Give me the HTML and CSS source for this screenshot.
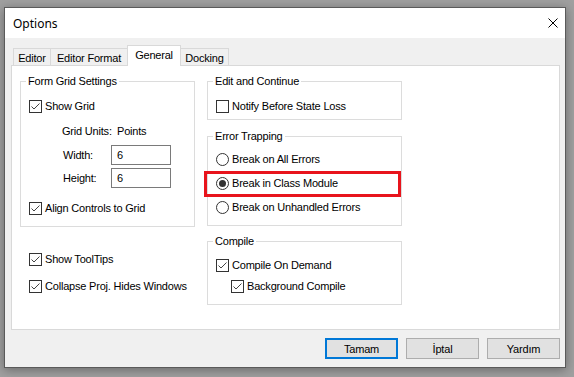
FILE: index.html
```html
<!DOCTYPE html>
<html>
<head>
<meta charset="utf-8">
<title>Options</title>
<link rel="stylesheet" href="styles.css">
</head>
<body>
<div class="window">
  <div class="titlebar">
    <span class="title">Options</span>
    <svg class="close" width="10" height="10" viewBox="0 0 10 10"><path d="M0.5 0.5L9.5 9.5M9.5 0.5L0.5 9.5" stroke="#000" stroke-width="1" fill="none"/></svg>
  </div>
  <div class="body">
    <div class="tabs">
      <div class="tab t-editor">Editor</div>
      <div class="tab t-format">Editor Format</div>
      <div class="tab t-general active">General</div>
      <div class="tab t-docking">Docking</div>
    </div>
    <div class="panel">
      <div class="col col-left">
        <fieldset class="group g-grid">
          <legend>Form Grid Settings</legend>
          <div class="row r-showgrid"><span class="cb"><svg width="11" height="11" viewBox="0 0 11 11"><path d="M1.5 5.5L4 8L9.5 2.5" stroke="#444" stroke-width="1" fill="none"/></svg></span><span class="txt">Show Grid</span></div>
          <div class="row r-units"><span class="lbl-units">Grid Units:</span><span>Points</span></div>
          <div class="row r-width"><span class="lbl-size">Width:</span><span class="input">6</span></div>
          <div class="row r-height"><span class="lbl-size">Height:</span><span class="input">6</span></div>
          <div class="row r-align"><span class="cb"><svg width="11" height="11" viewBox="0 0 11 11"><path d="M1.5 5.5L4 8L9.5 2.5" stroke="#444" stroke-width="1" fill="none"/></svg></span><span class="txt">Align Controls to Grid</span></div>
        </fieldset>
        <div class="row r-tooltips"><span class="cb"><svg width="11" height="11" viewBox="0 0 11 11"><path d="M1.5 5.5L4 8L9.5 2.5" stroke="#444" stroke-width="1" fill="none"/></svg></span><span class="txt">Show ToolTips</span></div>
        <div class="row r-collapse"><span class="cb"><svg width="11" height="11" viewBox="0 0 11 11"><path d="M1.5 5.5L4 8L9.5 2.5" stroke="#444" stroke-width="1" fill="none"/></svg></span><span class="txt">Collapse Proj. Hides Windows</span></div>
      </div>
      <div class="col col-right">
        <fieldset class="group g-edit">
          <legend>Edit and Continue</legend>
          <div class="row r-notify"><span class="cb"></span><span class="txt">Notify Before State Loss</span></div>
        </fieldset>
        <fieldset class="group g-error">
          <legend>Error Trapping</legend>
          <div class="row r-radio r-first"><span class="rb"></span><span class="txt">Break on All Errors</span></div>
          <div class="row r-radio r-selected"><span class="rb on"></span><span class="txt">Break in Class Module</span><span class="highlight"></span></div>
          <div class="row r-radio"><span class="rb"></span><span class="txt">Break on Unhandled Errors</span></div>
        </fieldset>
        <fieldset class="group g-compile">
          <legend>Compile</legend>
          <div class="row r-demand"><span class="cb"><svg width="11" height="11" viewBox="0 0 11 11"><path d="M1.5 5.5L4 8L9.5 2.5" stroke="#444" stroke-width="1" fill="none"/></svg></span><span class="txt">Compile On Demand</span></div>
          <div class="row r-background"><span class="cb"><svg width="11" height="11" viewBox="0 0 11 11"><path d="M1.5 5.5L4 8L9.5 2.5" stroke="#444" stroke-width="1" fill="none"/></svg></span><span class="txt">Background Compile</span></div>
        </fieldset>
      </div>
    </div>
    <div class="buttons">
      <div class="btn default">Tamam</div>
      <div class="btn">İptal</div>
      <div class="btn">Yardım</div>
    </div>
  </div>
</div>
</body>
</html>
```

FILE: styles.css
```css
* { box-sizing: border-box; }
html, body { margin: 0; }
body {
  background: #a0a0a0;
  padding: 7px 0 0 4px;
  height: 377px;
  overflow: hidden;
  font-family: "Liberation Sans", Arial, sans-serif;
  font-size: 11px;
  letter-spacing: -0.2px;
  color: #000;
}
.window {
  width: 562px;
  height: 361px;
  border: 1px solid #5a5a5a;
  background: #f0f0f0;
  display: flex;
  flex-direction: column;
  box-shadow: 0 2px 10px rgba(0, 0, 0, 0.35);
}
.titlebar {
  height: 30px;
  flex: none;
  background: #fff;
  display: flex;
  align-items: center;
  justify-content: space-between;
  padding: 0 7px 0 8px;
}
.title {
  font-family: "Noto Sans", "Open Sans", sans-serif;
  font-size: 12px;
  letter-spacing: 0;
}
.close { display: block; margin-top: -1px; }
.body {
  flex: 1;
  padding: 7px 5px 0 6px;
  display: flex;
  flex-direction: column;
}
.tabs {
  display: flex;
  align-items: flex-end;
  height: 21px;
  padding-left: 2px;
  margin-bottom: -1px;
  position: relative;
  z-index: 1;
}
.tab {
  height: 17px;
  margin-bottom: 1px;
  margin-right: -1px;
  border: 1px solid #d9d9d9;
  border-bottom: none;
  background: #f0f0f0;
  display: flex;
  align-items: center;
  justify-content: center;
  padding-top: 1px;
}
.tab.active {
  height: 21px;
  margin-bottom: 0;
  background: #fff;
  padding-top: 0;
  padding-bottom: 2px;
}
.t-editor { width: 38px; }
.t-format { width: 78px; }
.t-general { width: 54px; }
.t-docking { width: 49px; }
.panel {
  height: 265px;
  flex: none;
  border: 1px solid #d9d9d9;
  background: #fff;
  padding: 9px 0 0 8px;
  display: flex;
  gap: 12px;
}
.col { display: flex; flex-direction: column; }
.col-left { width: 175px; }
.col-right { width: 195px; }
.group {
  margin: 0;
  border: 1px solid #dcdcdc;
  padding: 0 0 0 8px;
  min-width: 0;
}
.group legend {
  padding: 0 2px;
  margin-left: -3px;
  line-height: 13px;
  height: 13px;
}
.row {
  display: flex;
  align-items: center;
  height: 20px;
  white-space: nowrap;
}
.cb {
  width: 13px;
  height: 13px;
  border: 1px solid #333;
  background: #fff;
  margin-right: 3px;
  flex: none;
  display: block;
}
.cb svg { display: block; }
.rb {
  width: 13px;
  height: 13px;
  border: 1px solid #333;
  border-radius: 50%;
  background: #fff;
  margin-right: 3px;
  flex: none;
  display: flex;
  align-items: center;
  justify-content: center;
}
.rb.on::after {
  content: "";
  width: 7px;
  height: 7px;
  border-radius: 50%;
  background: #333;
}
.txt { line-height: 13px; }

/* Form grid group */
.g-grid { padding-bottom: 8px; }
.r-showgrid { margin-top: 8px; }
.r-units { margin-top: 5px; padding-left: 33px; }
.lbl-units { width: 55px; }
.r-width { margin-top: 4px; padding-left: 34px; }
.r-height { margin-top: 3px; padding-left: 34px; }
.lbl-size { width: 48px; }
.input {
  width: 60px;
  height: 20px;
  border: 1px solid #7a7a7a;
  background: #fff;
  padding-left: 5px;
  display: flex;
  align-items: center;
}
.r-align { margin-top: 10px; }
.r-tooltips { margin-top: 22px; padding-left: 9px; }
.r-collapse { margin-top: 7px; padding-left: 9px; }

/* Right column groups */
.g-edit { padding-bottom: 3px; }
.r-notify { margin-top: 8px; }
.g-error { margin-top: 10px; padding-bottom: 6px; }
.r-radio { height: 24px; }
.r-first { margin-top: 4px; }
.r-selected { position: relative; }
.highlight {
  position: absolute;
  left: -12px;
  top: 0;
  width: 197px;
  height: 26px;
  border: 3px solid #e8141c;
}
.g-compile { margin-top: 9px; padding-bottom: 8px; }
.r-demand { margin-top: 7px; }
.r-background { margin-top: 1px; padding-left: 15px; }

/* Buttons */
.buttons {
  display: flex;
  justify-content: flex-end;
  gap: 8px;
  margin-top: 8px;
}
.btn {
  width: 73px;
  height: 21px;
  border: 1px solid #adadad;
  background: #e1e1e1;
  display: flex;
  align-items: center;
  justify-content: center;
}
.btn.default { border: 2px solid #0078d7; }
```
